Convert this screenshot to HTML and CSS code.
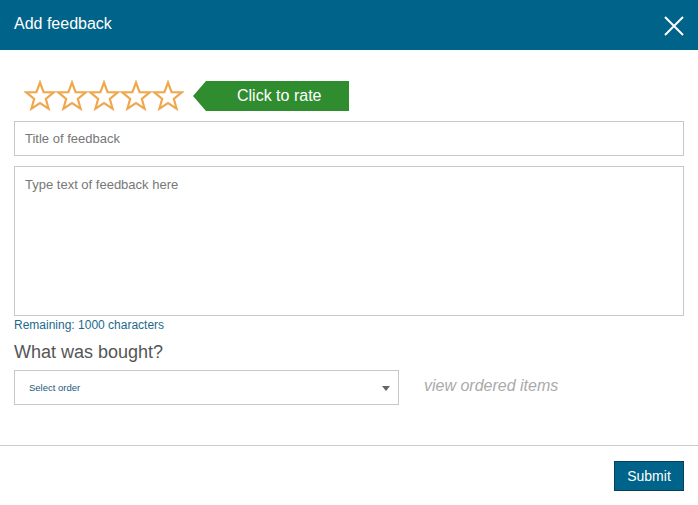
FILE: index.html
```html
<!DOCTYPE html>
<html>
<head>
<meta charset="utf-8">
<link rel="stylesheet" href="styles.css">
</head>
<body>
<div class="dialog">
  <div class="header">
    <div class="title">Add feedback</div>
    <svg class="close" width="20" height="20" viewBox="0 0 20 20"><path d="M1 1L19 19M19 1L1 19" stroke="#fff" stroke-width="2" fill="none"/></svg>
  </div>
  <div class="body">
    <div class="rating">
      <div class="stars">
        <svg class="star" width="32" height="32" viewBox="0 0 32 32"><path d="M16 2.5L19.6 12.2L29.8 12.4L21.8 18.8L24.6 28.7L16 23L7.4 28.7L10.2 18.8L2.2 12.4L12.4 12.2Z" fill="none" stroke="#f0a850" stroke-width="2.2"/></svg>
        <svg class="star" width="32" height="32" viewBox="0 0 32 32"><path d="M16 2.5L19.6 12.2L29.8 12.4L21.8 18.8L24.6 28.7L16 23L7.4 28.7L10.2 18.8L2.2 12.4L12.4 12.2Z" fill="none" stroke="#f0a850" stroke-width="2.2"/></svg>
        <svg class="star" width="32" height="32" viewBox="0 0 32 32"><path d="M16 2.5L19.6 12.2L29.8 12.4L21.8 18.8L24.6 28.7L16 23L7.4 28.7L10.2 18.8L2.2 12.4L12.4 12.2Z" fill="none" stroke="#f0a850" stroke-width="2.2"/></svg>
        <svg class="star" width="32" height="32" viewBox="0 0 32 32"><path d="M16 2.5L19.6 12.2L29.8 12.4L21.8 18.8L24.6 28.7L16 23L7.4 28.7L10.2 18.8L2.2 12.4L12.4 12.2Z" fill="none" stroke="#f0a850" stroke-width="2.2"/></svg>
        <svg class="star" width="32" height="32" viewBox="0 0 32 32"><path d="M16 2.5L19.6 12.2L29.8 12.4L21.8 18.8L24.6 28.7L16 23L7.4 28.7L10.2 18.8L2.2 12.4L12.4 12.2Z" fill="none" stroke="#f0a850" stroke-width="2.2"/></svg>
      </div>
      <div class="tag"><span class="tag-arrow"></span><span class="tag-text">Click to rate</span></div>
    </div>
    <div class="input">Title of feedback</div>
    <div class="textarea">Type text of feedback here</div>
    <div class="remaining">Remaining: 1000 characters</div>
    <div class="question">What was bought?</div>
    <div class="order-row">
      <div class="select"><span>Select order</span><span class="caret"></span></div>
      <div class="view">view ordered items</div>
    </div>
  </div>
  <div class="footer">
    <button class="submit">Submit</button>
  </div>
</div>
</body>
</html>
```

FILE: styles.css
```css
* { box-sizing: border-box; }
html, body { margin: 0; padding: 0; background: #fff; }
body { font-family: "Liberation Sans", Arial, sans-serif; width: 698px; height: 505px; overflow: hidden; }
.header {
  height: 50px;
  background: #006389;
  display: flex;
  align-items: center;
  justify-content: space-between;
  padding: 0 14px 0 14px;
}
.title { color: #fff; font-size: 16px; margin-top: -2px; }
.close { display: block; margin-top: 1px; }
.body { padding: 30px 14px 0 14px; }
.rating { display: flex; align-items: center; height: 32px; padding-left: 10px; }
.stars { display: flex; gap: 0; }
.star { display: block; }
.tag { display: flex; height: 30px; margin-left: 9px; margin-top: 0; }
.tag-arrow {
  width: 0; height: 0;
  border-top: 15px solid transparent;
  border-bottom: 15px solid transparent;
  border-right: 13px solid #2f8c2f;
}
.tag-text {
  background: #2f8c2f;
  color: #fff;
  font-size: 16px;
  width: 143px;
  display: flex;
  align-items: center;
  padding-left: 31px;
}
.input {
  margin-top: 9px;
  height: 35px;
  border: 1px solid #c8c8c8;
  color: #777;
  font-size: 13px;
  padding: 9px 10px;
}
.textarea {
  margin-top: 10px;
  height: 150px;
  border: 1px solid #c8c8c8;
  color: #777;
  font-size: 13px;
  padding: 10px 10px;
}
.remaining { color: #1b6a8c; font-size: 12px; margin-top: 2px; height: 16px; }
.question { color: #555; font-size: 18px; margin-top: 8px; height: 22px; }
.order-row { display: flex; align-items: center; margin-top: 6px; }
.select {
  width: 385px;
  height: 35px;
  border: 1px solid #c8c8c8;
  display: flex;
  align-items: center;
  justify-content: space-between;
  padding: 0 8px 0 14px;
  color: #1b5a7a;
  font-size: 9.5px;
}
.caret {
  width: 0; height: 0;
  border-left: 4px solid transparent;
  border-right: 4px solid transparent;
  border-top: 5px solid #666;
  margin-top: 2px;
}
.view { color: #aaa; font-style: italic; font-size: 16px; margin-left: 25px; margin-top: -3px; }
.footer {
  margin-top: 40px;
  border-top: 1px solid #ccc;
  display: flex;
  justify-content: flex-end;
  padding: 15px 14px 0 0;
}
.submit {
  background: #006389;
  border: 1px solid #0a3f56;
  color: #fff;
  font-family: "Liberation Sans", Arial, sans-serif;
  font-size: 14px;
  width: 70px;
  height: 30px;
  padding: 0;
}
```
